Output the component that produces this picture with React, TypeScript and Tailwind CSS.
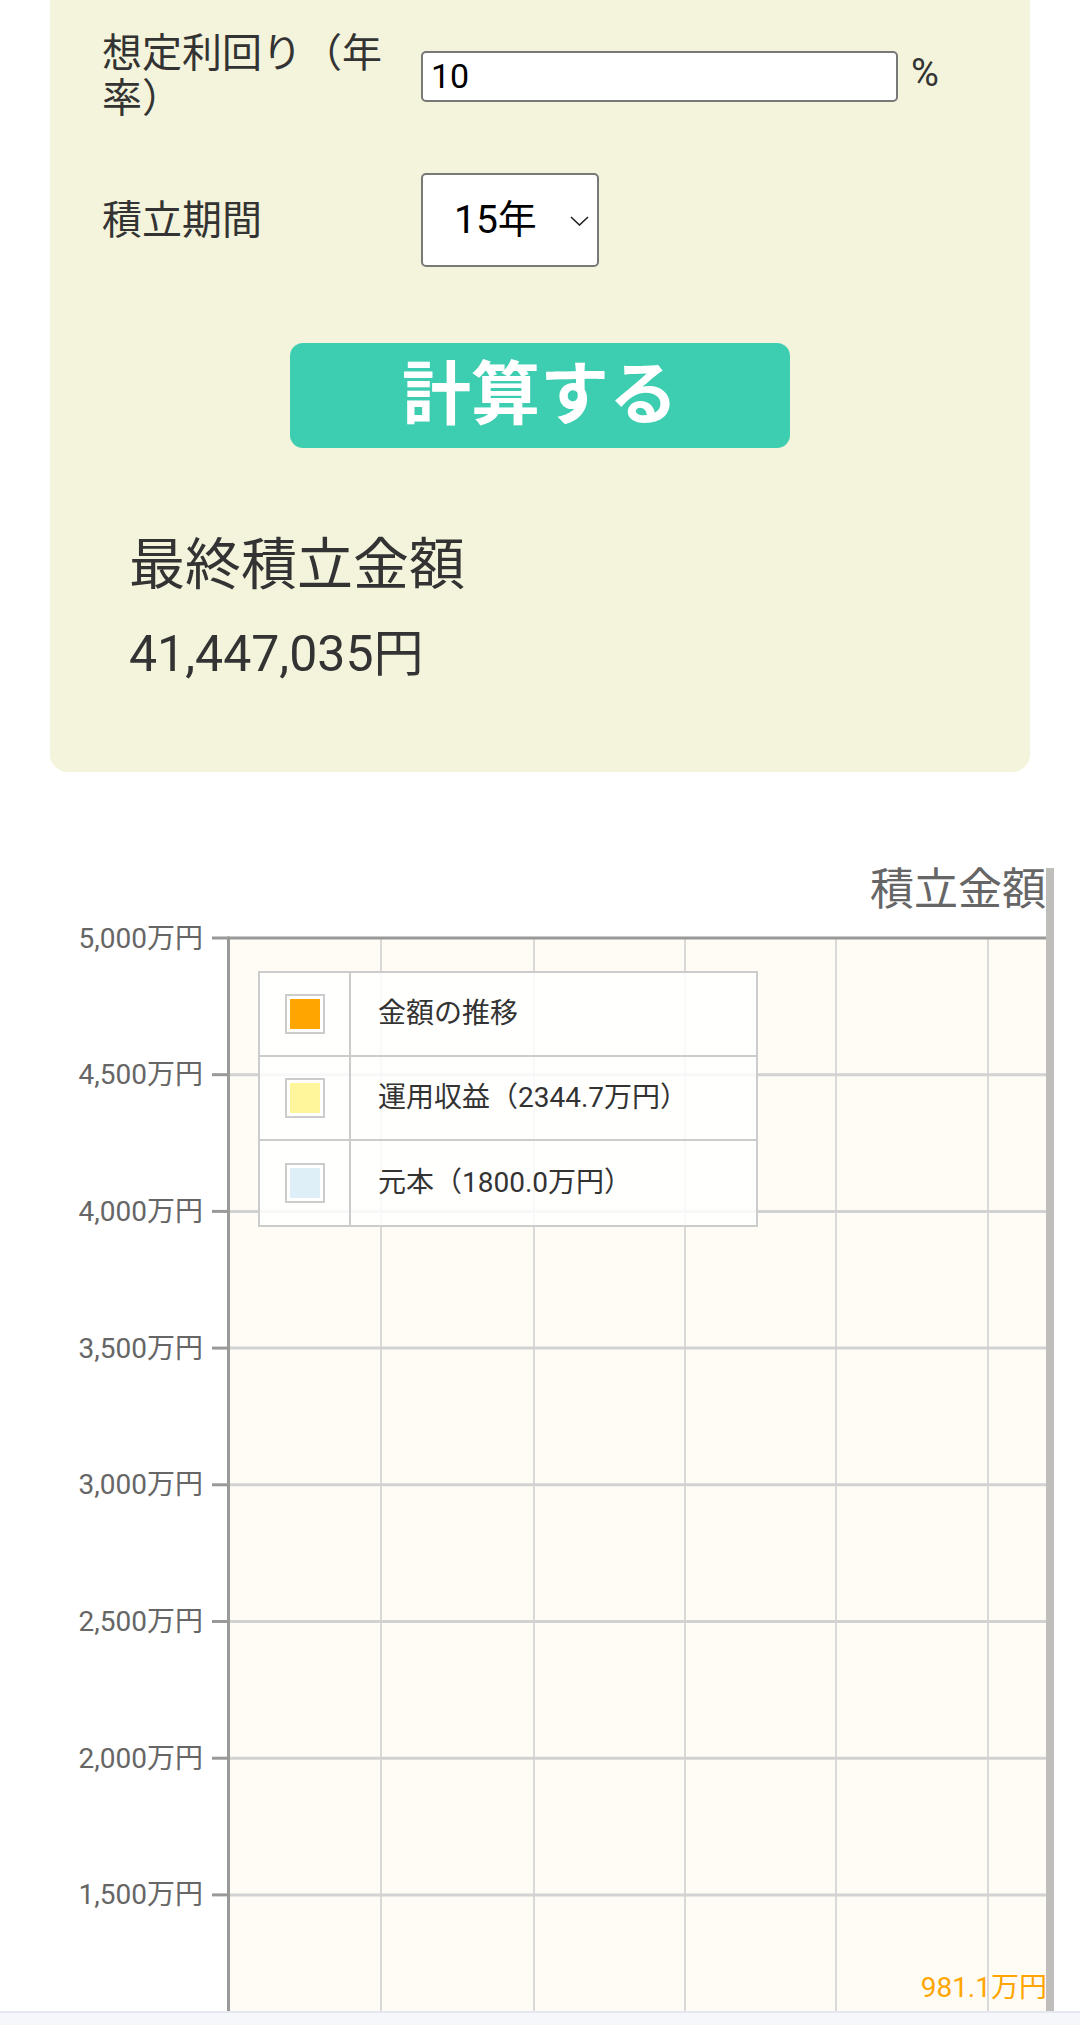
import React from "react";

const yLabels = [
  "5,000万円",
  "4,500万円",
  "4,000万円",
  "3,500万円",
  "3,000万円",
  "2,500万円",
  "2,000万円",
  "1,500万円",
];
const vLines = [381, 534, 685, 836, 988];
const legend = [
  { color: "#ffa500", label: "金額の推移" },
  { color: "#fff59a", label: "運用収益（2344.7万円）" },
  { color: "#deeff7", label: "元本（1800.0万円）" },
];

function Chart() {
  const top = 70;
  const step = 136.7;
  return (
    <svg width={1046} height={1143} className="absolute left-0 top-0" fontFamily="Roboto, 'Noto Sans CJK JP', sans-serif">
      <rect x={229} y={top} width={817} height={1143 - top} fill="#fffcf5" />
      {vLines.map((x) => (
        <line key={x} x1={x} x2={x} y1={top} y2={1143} stroke="#d9d9d9" strokeWidth={2} />
      ))}
      {yLabels.map((l, k) => {
        const y = top + step * k;
        return (
          <g key={l}>
            <line x1={229} x2={1046} y1={y} y2={y} stroke={k === 0 ? "#999999" : "#d2d2d2"} strokeWidth={3} />
            <line x1={212} x2={229} y1={y} y2={y} stroke="#999999" strokeWidth={3} />
            <text x={203} y={y} textAnchor="end" dominantBaseline="central" fontSize={28} fill="#666666">
              {l}
            </text>
          </g>
        );
      })}
      <line x1={228.5} x2={228.5} y1={top - 1.5} y2={1143} stroke="#999999" strokeWidth={3} />
      <text x={1047} y={1119} textAnchor="end" dominantBaseline="central" fontSize={28} fill="#ffa500">
        981.1万円
      </text>
    </svg>
  );
}

export default function App() {
  return (
    <div className="h-[2025px] w-[1080px] overflow-hidden bg-white font-[Roboto,'Noto_Sans_CJK_JP',sans-serif] text-[#333333] flex flex-col">
      <div className="ml-[50px] w-[980px] shrink-0 rounded-b-[18px] bg-[#f3f4db] pl-[52px] pr-[52px] pt-[31px] h-[772px]">
        <div className="flex items-center">
          <div className="w-[319px] text-[40px] leading-[45px]">想定利回り（年率）</div>
          <input
            readOnly
            value="10"
            className="h-[51px] w-[477px] rounded-[5px] border-2 border-[#787878] bg-white px-[8px] text-[34px] text-black outline-none"
          />
          <span className="ml-[13px] -mt-[6px] text-[38px] leading-none text-[#333333]">%</span>
        </div>
        <div className="mt-[52px] flex items-center">
          <div className="w-[319px] text-[40px] leading-[45px]">積立期間</div>
          <div className="relative h-[94px] w-[178px] rounded-[5px] border-2 border-[#787878] bg-white">
            <span className="absolute left-[31px] top-1/2 -translate-y-1/2 text-[39px] leading-none text-black">15年</span>
            <svg className="absolute left-[147px] top-[41px]" width="19" height="10" viewBox="0 0 19 10">
              <path d="M1 1 L9.5 9 L18 1" fill="none" stroke="#222" strokeWidth="1.6" />
            </svg>
          </div>
        </div>
        <div className="mt-[76px] flex justify-center">
          <button className="h-[105px] w-[500px] rounded-[13px] bg-[#3dcdb1] text-[69px] font-bold leading-none text-white">
            計算する
          </button>
        </div>
        <div className="ml-[27px] mt-[89px] text-[56px] leading-none text-[#333333]">最終積立金額</div>
        <div className="ml-[27px] mt-[36px] text-[50px] leading-none text-[#333333]">41,447,035円</div>
      </div>

      <div className="mt-[96px] relative h-[1143px] w-[1054px] shrink-0 border-r-[8px] border-[#bfbebb]">
        <Chart />
        <div className="absolute right-0 top-0 text-[44px] leading-none text-[#666666]">積立金額</div>
        <div className="absolute left-[258px] top-[103px] w-[500px] border-2 border-[#cccccc] bg-white/85 divide-y-2 divide-[#cccccc]">
          {legend.map((r) => (
            <div key={r.label} className="flex h-[84px] items-stretch">
              <div className="flex w-[91px] items-center justify-center border-r-2 border-[#cccccc]">
                <div className="h-[40px] w-[40px] border-2 border-[#cccccc] bg-white p-[3px]">
                  <div className="h-full w-full" style={{ backgroundColor: r.color }} />
                </div>
              </div>
              <div className="flex items-center pl-[27px] text-[28px] text-[#333333]">{r.label}</div>
            </div>
          ))}
        </div>
      </div>
      <div className="h-[14px] shrink-0 border-t-2 border-[#e6e8ef] bg-[#f6f7fb]" />
    </div>
  );
}
